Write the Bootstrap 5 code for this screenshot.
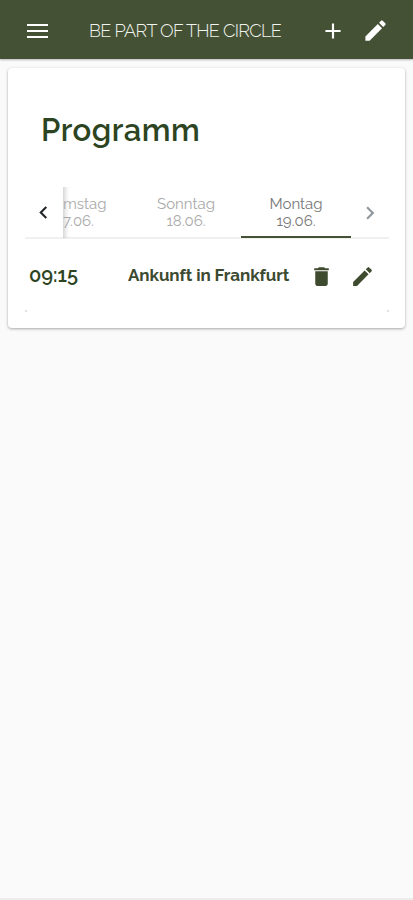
<!DOCTYPE html>
<html lang="de">
<head>
<meta charset="utf-8">
<meta name="viewport" content="width=device-width, initial-scale=1">
<title>Be Part of the Circle</title>
<link href="https://cdn.jsdelivr.net/npm/bootstrap@5.3.0/dist/css/bootstrap.min.css" rel="stylesheet">
<style>
body{font-family:Raleway,Lato,"Open Sans",sans-serif;font-feature-settings:"onum" 1;background:#fafafa;color:#2c4421;height:900px;overflow:hidden}
svg{display:block;fill:currentColor;flex:none}
.topbar{height:59px;background:#445135;border-bottom:1px solid #445135;box-shadow:0 1px 2px #0004;padding:3px 24px 0 25px}
.brand{font-size:18px;font-weight:300;letter-spacing:-.69px;margin-left:40px;width:231px;flex:none;line-height:24px;white-space:nowrap;color:#f2f4ef}
.panel{margin:9px 8px 0;height:260px;border-radius:4px;box-shadow:0 1px 3px #0005;padding:0 17px}
.heading{font-size:31px;font-weight:650;letter-spacing:.5px;line-height:36px;margin:44px 0 0 16px}
.days{height:51px;margin-top:40px;border-bottom:2px solid #f0f0f0;width:364px}
.arrow{width:38px}
.strip{width:288px;height:51px;box-shadow:inset 6px 0 5px -4px #0003}
.day{width:110px;height:51px;flex:none;font-size:15px;line-height:17px;color:#aaa;padding-top:9px;text-align:center}
.day.first{width:68px;text-align:left}
.day.current{color:#777;border-bottom:2px solid #445135}
.time{font-size:20px;font-weight:600;width:99px;margin-left:4px;position:relative;top:-1px}
.event{font-size:17px;letter-spacing:-.08px;width:181px;white-space:nowrap;color:#3b4a30}
.entry{height:74px;width:364px}
.entry svg{color:#3f4b2f}
.corners{height:2px;margin-top:-3px;width:364px;border:solid #ddd;border-width:0 2px;border-radius:2px}
.foot{height:2px;background:#ececec}
</style>
</head>
<body class="d-flex flex-column">
<header class="topbar d-flex align-items-center text-white">
<svg width="24" height="24" viewBox="0 0 24 24"><path d="M2 5h21v2H2zm0 6h21v2H2zm0 6h21v2H2z"/></svg>
<div class="brand">BE PART OF THE CIRCLE</div>
<svg width="26" height="26" viewBox="0 0 24 24"><path d="M19 13H13v6h-2V13H5v-2H11V5h2V11h6z"/></svg>
<svg class="ms-3" width="27" height="27" viewBox="0 0 24 24"><path d="M3 17.250V21h3.750L17.810 9.940l-3.750-3.750zM20.710 7.040a1 1 0 0 0 0-1.410l-2.340-2.340a1 1 0 0 0-1.410 0l-1.830 1.830 3.750 3.750z"/></svg>
</header>
<main class="panel bg-white d-flex flex-column">
<h1 class="heading">Programm</h1>
<nav class="days d-flex align-items-center">
<div class="arrow d-flex justify-content-center text-dark"><svg width="25" height="25" viewBox="0 0 24 24"><path d="M14.410 7.410 13 6l-6 6 6 6 1.410-1.410L9.830 12z"/></svg></div>
<div class="strip d-flex overflow-hidden">
<div class="day first">mstag<br>7.06.</div>
<div class="day">Sonntag<br>18.06.</div>
<div class="day current">Montag<br>19.06.</div>
</div>
<div class="arrow d-flex justify-content-center text-secondary opacity-75"><svg width="26" height="26" viewBox="0 0 24 24"><path d="M10 6 8.590 7.410 13.170 12l-4.580 4.590L10 18l6-6z"/></svg></div>
</nav>
<div class="entry d-flex align-items-center fw-bold">
<div class="time">09:15</div>
<div class="event">Ankunft in Frankfurt</div>
<svg width="25" height="25" viewBox="0 0 24 24"><path d="M6 19c0 1.100.9 2 2 2h8c1.100 0 2-.9 2-2V7H6zM19 4h-3.500l-1-1h-5l-1 1H5v2h14z"/></svg>
<svg class="ms-3" width="25" height="25" viewBox="0 0 24 24"><path d="M3 17.250V21h3.750L17.810 9.940l-3.750-3.750zM20.710 7.040a1 1 0 0 0 0-1.410l-2.340-2.340a1 1 0 0 0-1.410 0l-1.830 1.830 3.750 3.750z"/></svg>
</div>
<div class="corners"></div>
</main>
<div class="foot mt-auto"></div>
<script src="https://cdn.jsdelivr.net/npm/bootstrap@5.3.0/dist/js/bootstrap.bundle.min.js"></script>
</body>
</html>
